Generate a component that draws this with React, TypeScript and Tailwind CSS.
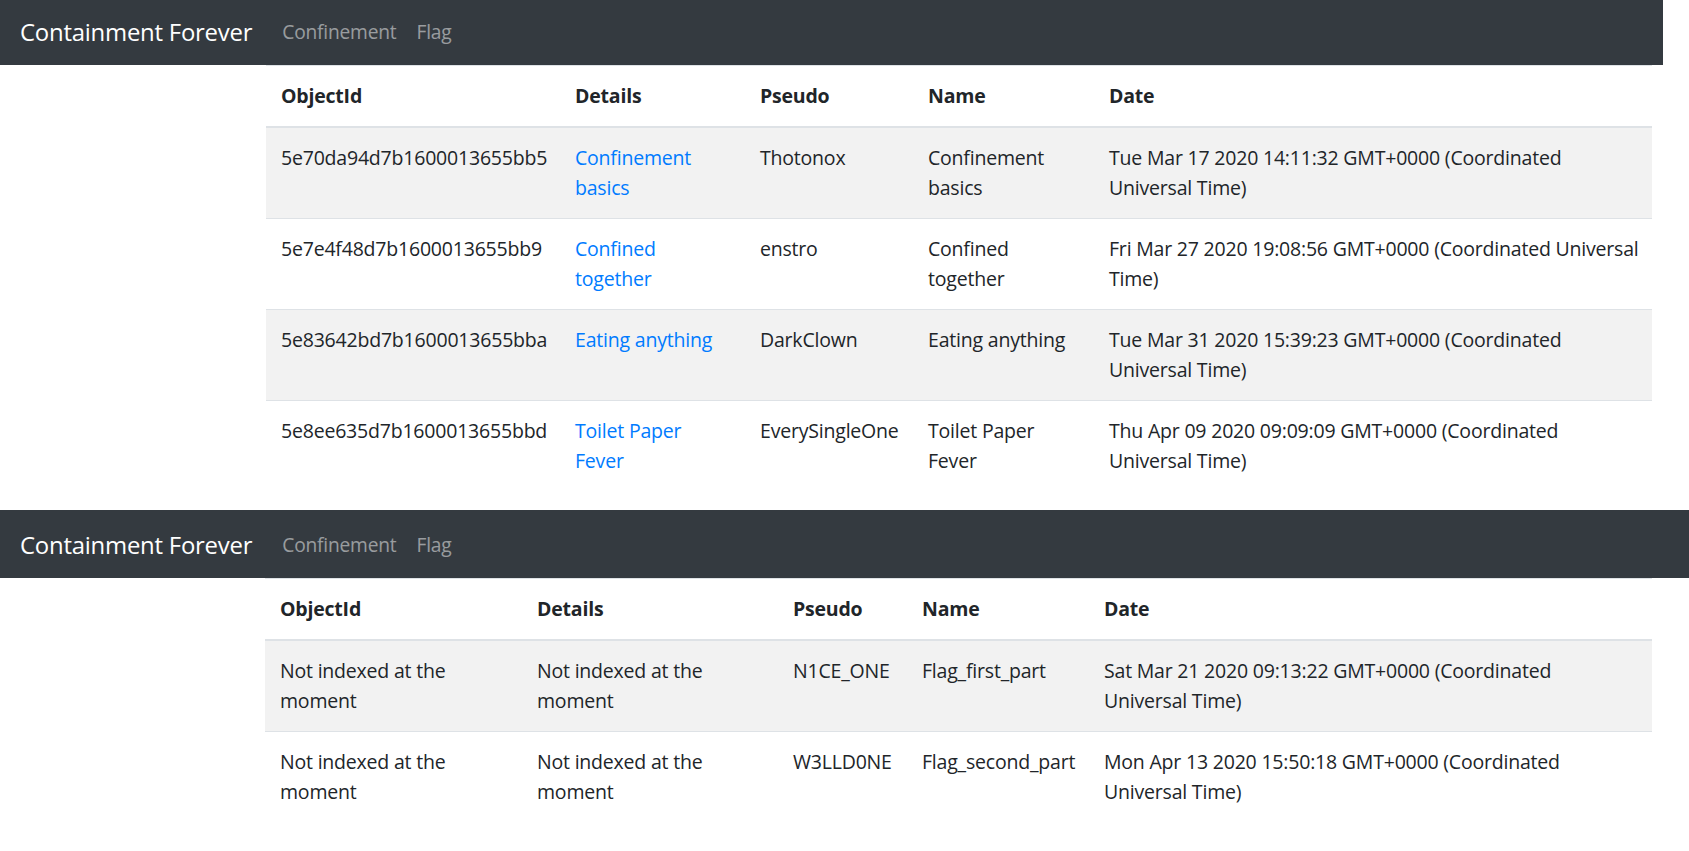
import React from "react";

type Cell = { lines: string[]; link?: boolean };
type Row = Cell[];

const t1Cols = [294, 185, 168, 181, 558];
const t2Cols = [257, 256, 129, 182, 563];

const headers = ["ObjectId", "Details", "Pseudo", "Name", "Date"];

const rows1: Row[] = [
  [
    { lines: ["5e70da94d7b1600013655bb5"] },
    { lines: ["Confinement", "basics"], link: true },
    { lines: ["Thotonox"] },
    { lines: ["Confinement", "basics"] },
    { lines: ["Tue Mar 17 2020 14:11:32 GMT+0000 (Coordinated", "Universal Time)"] },
  ],
  [
    { lines: ["5e7e4f48d7b1600013655bb9"] },
    { lines: ["Confined", "together"], link: true },
    { lines: ["enstro"] },
    { lines: ["Confined", "together"] },
    { lines: ["Fri Mar 27 2020 19:08:56 GMT+0000 (Coordinated Universal", "Time)"] },
  ],
  [
    { lines: ["5e83642bd7b1600013655bba"] },
    { lines: ["Eating anything"], link: true },
    { lines: ["DarkClown"] },
    { lines: ["Eating anything"] },
    { lines: ["Tue Mar 31 2020 15:39:23 GMT+0000 (Coordinated", "Universal Time)"] },
  ],
  [
    { lines: ["5e8ee635d7b1600013655bbd"] },
    { lines: ["Toilet Paper", "Fever"], link: true },
    { lines: ["EverySingleOne"] },
    { lines: ["Toilet Paper", "Fever"] },
    { lines: ["Thu Apr 09 2020 09:09:09 GMT+0000 (Coordinated", "Universal Time)"] },
  ],
];

const rows2: Row[] = [
  [
    { lines: ["Not indexed at the", "moment"] },
    { lines: ["Not indexed at the", "moment"] },
    { lines: ["N1CE_ONE"] },
    { lines: ["Flag_first_part"] },
    { lines: ["Sat Mar 21 2020 09:13:22 GMT+0000 (Coordinated", "Universal Time)"] },
  ],
  [
    { lines: ["Not indexed at the", "moment"] },
    { lines: ["Not indexed at the", "moment"] },
    { lines: ["W3LLD0NE"] },
    { lines: ["Flag_second_part"] },
    { lines: ["Mon Apr 13 2020 15:50:18 GMT+0000 (Coordinated", "Universal Time)"] },
  ],
];

function Navbar({ first }: { first: boolean }) {
  return (
    <div className={"bg-[#343a40] overflow-hidden " + (first ? "h-[65px]" : "h-[68px]")}>
      <nav
        className={
          "flex h-[70px] items-center px-[20px] py-[10px] " + (first ? "-mt-[3px]" : "mt-0")
        }
      >
        <a className="mr-[20px] py-[6px] text-[23.9px] leading-[37.5px] tracking-[-0.22px] text-white">
          Containment Forever
        </a>
        <a className="px-[10px] py-[10px] text-[19.2px] leading-[30px] text-white/50">
          Confinement
        </a>
        <a className="px-[10px] py-[10px] text-[19.2px] leading-[30px] text-white/50">
          Flag
        </a>
      </nav>
    </div>
  );
}

function DataTable({ cols, rows, first }: { cols: number[]; rows: Row[]; first: boolean }) {
  return (
    <table
      className={
        "table-fixed border-collapse text-[#212529] " +
        (first ? "ml-[266px] w-[1386px]" : "ml-[265px] w-[1387px]")
      }
    >
      <colgroup>
        {cols.map((w, i) => (
          <col key={i} style={{ width: w }} />
        ))}
      </colgroup>
      <thead>
        <tr>
          {headers.map((h) => (
            <th
              key={h}
              className="border-t border-b-2 border-[#dee2e6] p-[15px] text-left align-bottom font-bold leading-[30px]"
            >
              {h}
            </th>
          ))}
        </tr>
      </thead>
      <tbody>
        {rows.map((r, ri) => (
          <tr key={ri} className={ri % 2 === 0 ? "bg-[#f2f2f2]" : "bg-white"}>
            {r.map((c, ci) => (
              <td
                key={ci}
                className="border-t border-[#dee2e6] p-[15px] align-top leading-[30px] whitespace-nowrap"
              >
                {c.lines.map((l, li) => (
                  <React.Fragment key={li}>
                    {li > 0 && <br />}
                    {c.link ? <a className="text-[#007bff]">{l}</a> : l}
                  </React.Fragment>
                ))}
              </td>
            ))}
          </tr>
        ))}
      </tbody>
    </table>
  );
}

export default function App() {
  return (
    <div className="w-[1689px] h-[851px] overflow-hidden bg-white font-['Open_Sans',sans-serif] text-[19.5px] tracking-[-0.2px]">
      <div className="w-[1663px] h-[510px] overflow-hidden">
        <Navbar first={true} />
        <DataTable cols={t1Cols} rows={rows1} first={true} />
      </div>
      <div className="w-[1689px] h-[341px] overflow-hidden">
        <Navbar first={false} />
        <DataTable cols={t2Cols} rows={rows2} first={false} />
      </div>
    </div>
  );
}
